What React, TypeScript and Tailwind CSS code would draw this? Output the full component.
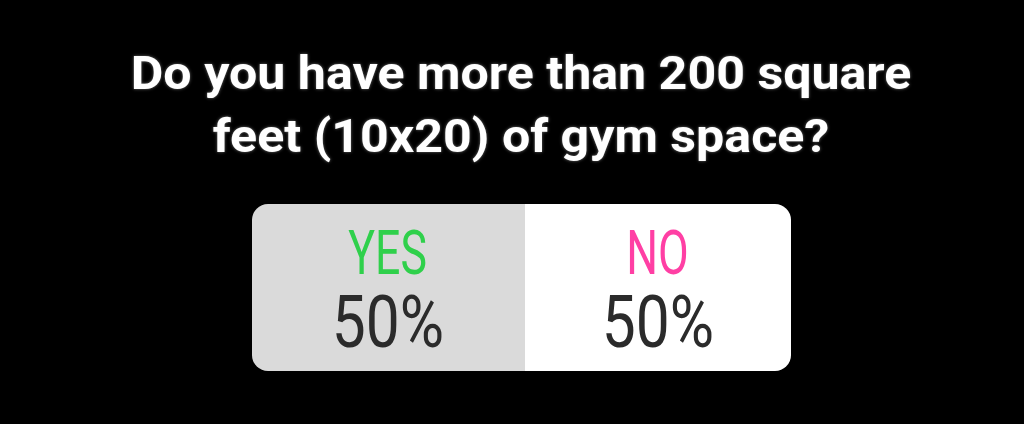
const Option = ({
  label,
  color,
  bg,
}: {
  label: string;
  color: string;
  bg: string;
}) => (
  <div className={`flex flex-col items-center pt-[18px] ${bg}`}>
    <span
      className={`inline-block h-[62px] scale-x-[0.72] text-[62px] leading-none font-normal ${color}`}
    >
      {label}
    </span>
    <span className="mt-[3px] inline-block h-[72px] scale-x-[0.84] text-[72px] leading-none font-normal text-[#2b2b2b]">
      50%
    </span>
  </div>
);

export default function App() {
  return (
    <div className="flex h-[424px] w-[1024px] flex-col items-center bg-black pt-[42px] pl-[18px] font-['Roboto',sans-serif]">
      <h1 className="scale-x-[1.09] text-center text-[46px] leading-[63px] font-bold text-white [text-shadow:0_0_3px_rgba(255,255,255,0.45)]">
        Do you have more than 200 square
        <br />
        feet (10x20) of gym space?
      </h1>
      <div className="mt-[36px] grid h-[167px] w-[539px] grid-cols-[273px_1fr] overflow-hidden rounded-[16px]">
        <Option label="YES" color="text-[#2fd04b]" bg="bg-[#dadada]" />
        <Option label="NO" color="text-[#ff3fa4]" bg="bg-white" />
      </div>
    </div>
  );
}
